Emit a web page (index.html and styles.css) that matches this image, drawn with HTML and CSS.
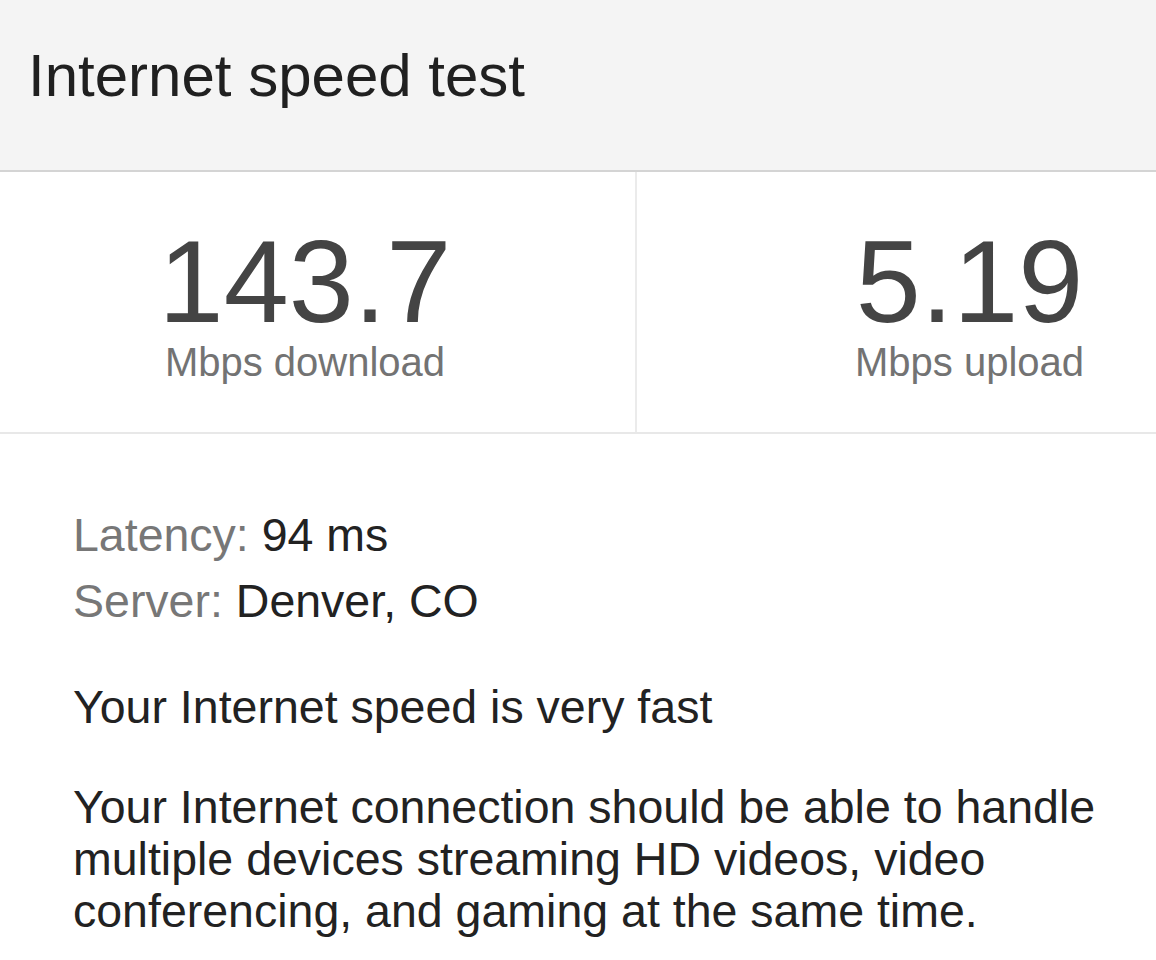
FILE: index.html
```html
<!DOCTYPE html>
<html lang="en">
<head>
<meta charset="utf-8">
<title>Internet speed test</title>
<link rel="stylesheet" href="styles.css">
</head>
<body>
<div class="card">
  <header class="card-header">
    <h1 class="title">Internet speed test</h1>
  </header>
  <section class="stats">
    <div class="stat stat-download">
      <div class="stat-value">143.7</div>
      <div class="stat-label">Mbps download</div>
    </div>
    <div class="stat stat-upload">
      <div class="stat-value">5.19</div>
      <div class="stat-label">Mbps upload</div>
    </div>
  </section>
  <section class="details">
    <div class="meta">
      <div class="meta-row"><span class="meta-key">Latency:</span> <span class="meta-val">94 ms</span></div>
      <div class="meta-row"><span class="meta-key">Server:</span> <span class="meta-val">Denver, CO</span></div>
    </div>
    <p class="verdict">Your Internet speed is very fast</p>
    <p class="desc">Your Internet connection should be able to handle multiple devices streaming HD videos, video conferencing, and gaming at the same time.</p>
  </section>
</div>
</body>
</html>
```

FILE: styles.css
```css
html, body {
  margin: 0;
  padding: 0;
  background: #ffffff;
}

body {
  font-family: "Liberation Sans", Arial, Helvetica, sans-serif;
  color: #222222;
}

.card {
  width: 1156px;
}

.card-header {
  box-sizing: border-box;
  height: 172px;
  padding: 41px 0 0 28px;
  background: #f4f4f4;
  border-bottom: 2px solid #d4d4d4;
}

.title {
  margin: 0;
  font-size: 60px;
  line-height: 70px;
  font-weight: 400;
  color: #202020;
}

.stats {
  display: grid;
  grid-template-columns: 637px 1fr;
  border-bottom: 2px solid #e8e8e8;
}

.stat {
  box-sizing: border-box;
  padding-top: 51px;
  padding-bottom: 49px;
  text-align: center;
}

.stat-download {
  border-right: 2px solid #ebebeb;
  padding-right: 25px;
}

.stat-upload {
  padding-left: 146px;
}

.stat-value {
  font-size: 117px;
  line-height: 117px;
  color: #444444;
}

.stat-label {
  margin-top: 1px;
  font-size: 40px;
  line-height: 42px;
  color: #737373;
}

.details {
  padding: 68px 20px 0 73px;
}

.meta-row {
  font-size: 46.5px;
  line-height: 66px;
}

.meta-key {
  color: #777777;
}

.meta-val {
  color: #222222;
}

.verdict,
.desc {
  font-size: 46.5px;
  line-height: 52px;
  margin: 0;
  color: #222222;
}

.verdict {
  margin-top: 47px;
}

.desc {
  margin-top: 48px;
}
```
